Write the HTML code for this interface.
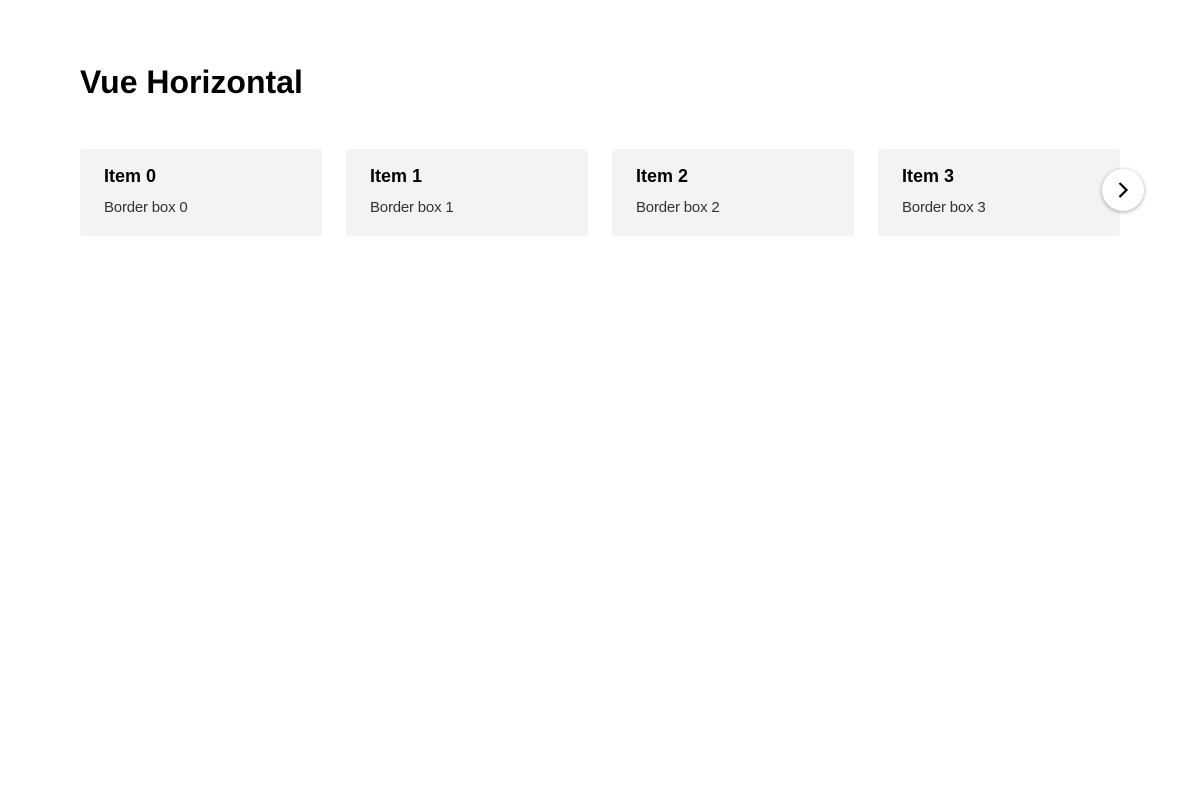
<!DOCTYPE html>
<html><head><style>
body{margin:0;background:#fff;font-family:"Liberation Sans",Arial,sans-serif;width:1200px;height:800px;overflow:hidden;position:relative}
h1{position:absolute;left:80px;top:62px;margin:0;font-size:32px;font-weight:bold;color:#000;line-height:40px}
.card{position:absolute;top:149px;width:242px;height:87px;background:#f3f3f3;border-radius:3px;box-sizing:border-box;padding:14px 24px}
.t{font-weight:bold;font-size:18px;color:#000;line-height:24px;margin-top:1px}
.s{font-size:15px;color:#333;line-height:20px;margin-top:10px;letter-spacing:-0.2px}
.btn{position:absolute;left:1102px;top:169px;width:42px;height:42px;border-radius:50%;background:#fff;box-shadow:0 1px 4px rgba(0,0,0,.35)}
</style></head><body>
<h1>Vue Horizontal</h1>
<div class="card" style="left:80px"><div class="t">Item 0</div><div class="s">Border box 0</div></div>
<div class="card" style="left:346px"><div class="t">Item 1</div><div class="s">Border box 1</div></div>
<div class="card" style="left:612px"><div class="t">Item 2</div><div class="s">Border box 2</div></div>
<div class="card" style="left:878px"><div class="t">Item 3</div><div class="s">Border box 3</div></div>
<div class="btn"><svg width="42" height="42" viewBox="0 0 42 42"><path d="M17.5 14 L24.5 21 L17.5 28" fill="none" stroke="#000" stroke-width="2.2"/></svg></div>
</body></html>
